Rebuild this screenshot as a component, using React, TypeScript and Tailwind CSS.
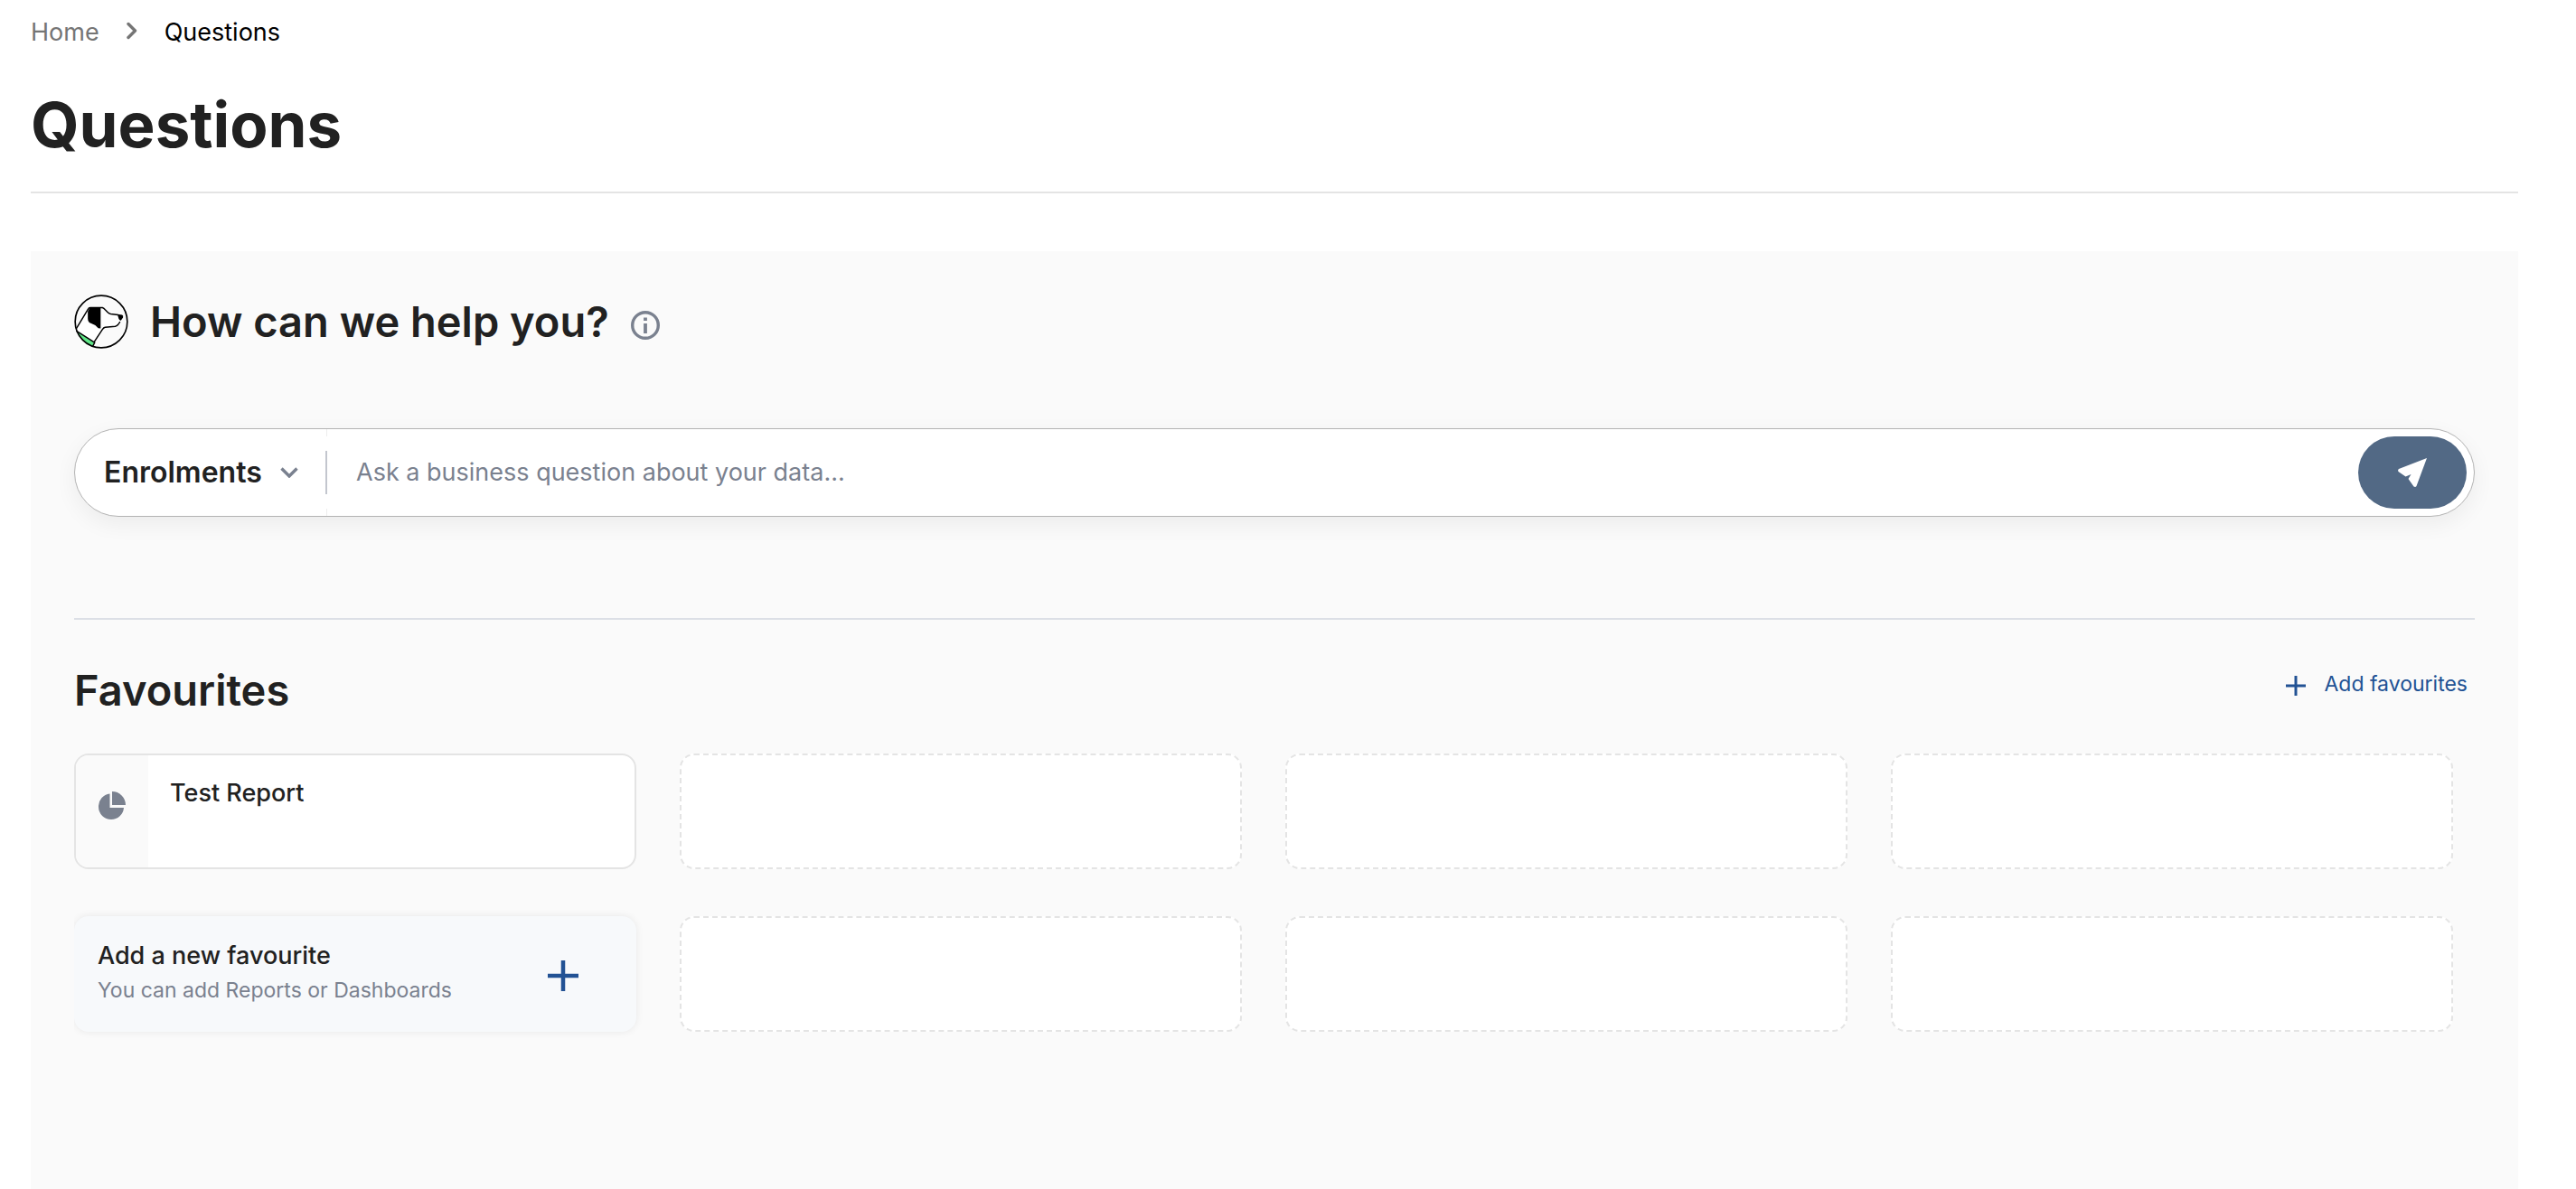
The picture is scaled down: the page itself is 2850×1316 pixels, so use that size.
import React from "react";

function DogLogo() {
  return (
    <svg viewBox="36 31 182 182" className="h-[60px] w-[60px] shrink-0" fill="none" aria-hidden="true">
      <circle cx="127" cy="122" r="87.5" fill="#fafafa" />
      <path
        d="M43 146 L83 80 Q85 75 90 75 L131 75 Q136 77 140 82 L149 91 Q153 95 159 96 L183 99 L197 103 L198 110 L190 123 Q183 136 174 138 L140 141 Q135 142 131 148 L104 192 Z"
        fill="#fff"
      />
      <path d="M45 154 L103 192 L99 203 Q80 202 66 187 Q50 170 45 154 Z" fill="#5fe888" />
      <path
        d="M43 146 L83 80 Q85 75 90 75 L131 75 Q136 77 140 82 L149 91 Q153 95 159 96 L183 99 M190 122 Q183 136 174 138 L140 141 Q135 142 131 148 L102 192 M43 153 L105 192 L99 204"
        stroke="#000"
        strokeWidth="4.5"
        strokeLinejoin="round"
      />
      <path d="M89 74 L125 74 L125 145 L117 144 L107 134 L87 125 Q82 121 82 112 L82 88 Z" fill="#000" />
      <path d="M181 97 L197 99 Q202 101 200 108 L193 118 Q189 119 186 113 Z" fill="#000" />
      <circle cx="127" cy="122" r="87.5" stroke="#000" strokeWidth="5" />
    </svg>
  );
}

function InfoIcon() {
  return (
    <svg viewBox="0 0 32 32" className="h-8 w-8" fill="none" aria-hidden="true">
      <circle cx="16" cy="16" r="14.3" stroke="#7a818f" strokeWidth="3.4" />
      <path d="M16 14V25M16 7.500V11" stroke="#7a818f" strokeWidth="3.8" />
    </svg>
  );
}

function Plus({ className, strokeWidth }: { className: string; strokeWidth: number }) {
  return (
    <svg viewBox="0 0 34 34" className={className} fill="none" aria-hidden="true">
      <path d="M17 0V34M0 17H34" stroke="#225294" strokeWidth={strokeWidth} />
    </svg>
  );
}

function EmptySlot() {
  return <li className="h-32 rounded-2xl border-2 border-dashed border-[#e4e4e4] bg-white" />;
}

export default function App() {
  return (
    <div className="flex min-h-screen flex-col bg-white pr-16 pl-[34px] font-['Inter',sans-serif] text-[#212121]">
      <nav aria-label="Breadcrumb" className="pt-4">
        <ol className="flex items-center text-[27px] leading-10">
          <li>
            <a href="#home" className="text-[#757575]">Home</a>
          </li>
          <li aria-hidden="true" className="mx-[30px]">
            <svg viewBox="0 0 12 20" className="mb-1 h-5 w-3" fill="none">
              <path d="M2 2.5L9.5 10L2 17.5" stroke="#757575" strokeWidth="3.4" strokeLinecap="round" strokeLinejoin="round" />
            </svg>
          </li>
          <li className="text-black" aria-current="page">Questions</li>
        </ol>
      </nav>

      <h1 className="mt-9 border-b-2 border-[#e4e4e4] pb-7 text-[69px] leading-[92px] font-bold">Questions</h1>

      <main className="mt-16 flex-1 bg-[#fafafa] px-12 pt-12">
        <div className="flex h-[60px] items-center">
          <DogLogo />
          <h2 className="ml-6 text-[47px] leading-[60px] font-semibold">How can we help you?</h2>
          <button type="button" aria-label="More information" className="ml-6 pt-2">
            <InfoIcon />
          </button>
        </div>

        <form
          onSubmit={(e) => e.preventDefault()}
          className="mt-[88px] flex h-[98px] items-center rounded-full border border-[#b3b3b3] bg-white pr-2 shadow-[0_8px_24px_rgba(0,0,0,0.06)]"
        >
          <div className="relative flex items-center">
            <select
              aria-label="Data set"
              className="w-[277px] appearance-none bg-transparent pl-8 text-[32px] leading-10 font-semibold outline-none"
            >
              <option>Enrolments</option>
            </select>
            <svg viewBox="0 0 20 12" className="pointer-events-none absolute right-[30px] h-3 w-5" fill="none" aria-hidden="true">
              <path d="M1.500 1.500L10 10L18.500 1.500" stroke="#7a818f" strokeWidth="3.4" />
            </svg>
          </div>
          <div className="flex h-full flex-col items-center justify-between">
            <div className="h-2 w-px bg-[#ededed]" />
            <div className="h-12 w-0.5 bg-[#c3c6ce]" />
            <div className="h-2 w-px bg-[#ededed]" />
          </div>
          <input
            type="text"
            aria-label="Ask a question"
            placeholder="Ask a business question about your data..."
            className="min-w-0 flex-1 bg-transparent px-8 text-[27px] leading-10 outline-none placeholder:text-[#7a818f]"
          />
          <button type="submit" aria-label="Send" className="flex h-20 w-[120px] items-center justify-center rounded-full bg-[#526985]">
            <svg viewBox="0 0 32 32" className="h-8 w-8" fill="#fff" aria-hidden="true">
              <path d="M32 0L20.500 31Q19.500 32.500 17.500 31.500L11.500 23L14.500 18L8.500 20.500L0.500 15Q-0.500 13 1 12Z" />
            </svg>
          </button>
        </form>

        <section className="mt-28 border-t-2 border-[#dcdfe6] pt-10">
          <div className="flex items-start justify-between pr-2">
            <h2 className="pt-2 text-[47px] leading-[60px] font-semibold">Favourites</h2>
            <button type="button" className="mt-[15px] flex items-center text-[23px] leading-8 text-[#225294]">
              <Plus className="mt-1 mr-5 h-[22px] w-[22px]" strokeWidth={4.6} />
              Add favourites
            </button>
          </div>

          <ul className="mt-10 mr-6 grid grid-cols-4 gap-x-12 gap-y-[52px]">
            <li className="flex h-32 overflow-hidden rounded-2xl border-2 border-[#e4e4e4] bg-white">
              <div className="flex w-20 items-center justify-center bg-[#fafafa] pb-[14px]">
                <svg viewBox="0 0 30 31" className="h-[31px] w-[30px]" fill="#7a818f" aria-hidden="true">
                  <path d="M12.500 2.500V18H28A14 14 0 0 1 14 31A14 14 0 0 1 0 17A14 14 0 0 1 12.500 2.500Z" />
                  <path d="M15 0A15 15 0 0 1 30 15H15Z" />
                </svg>
              </div>
              <a href="#test-report" className="flex-1 px-6 pt-[22px] text-[27px] leading-10 font-medium">Test Report</a>
            </li>
            <EmptySlot />
            <EmptySlot />
            <EmptySlot />
            <li className="[clip-path:inset(-12px_-12px_-12px_0)]">
              <button
                type="button"
                className="flex h-32 w-full items-center justify-between rounded-2xl bg-[#f7f9fb] pr-16 pl-[26px] text-left shadow-[0_0_8px_rgba(0,0,0,0.08)]"
              >
                <span className="flex flex-col">
                  <span className="text-[27px] leading-9 font-medium">Add a new favourite</span>
                  <span className="text-[23px] leading-10 text-[#7a818f]">You can add Reports or Dashboards</span>
                </span>
                <Plus className="mt-1 h-[34px] w-[34px]" strokeWidth={4.5} />
              </button>
            </li>
            <EmptySlot />
            <EmptySlot />
            <EmptySlot />
          </ul>
        </section>
      </main>
    </div>
  );
}
